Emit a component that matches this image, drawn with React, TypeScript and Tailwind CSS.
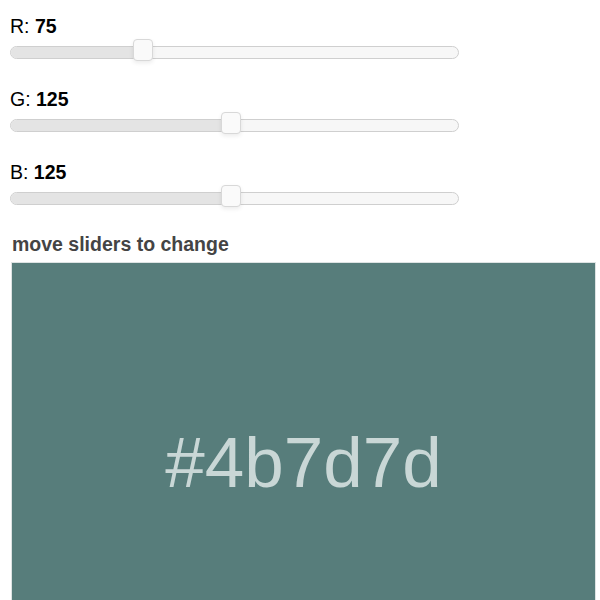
import React, { useState } from 'react';

const channels = [
  { key: 'r', label: 'R' },
  { key: 'g', label: 'G' },
  { key: 'b', label: 'B' },
] as const;

type Rgb = { r: number; g: number; b: number };

function Slider({ value }: { value: number }) {
  // thumb travel measured from the reference
  const left = Math.round(value * 1.76 - 10);
  return (
    <div className="relative mt-[9px] h-[13px] w-[449px] rounded-full border border-[#cfcfcf] bg-[#f7f7f7]">
      <div
        className="h-full rounded-l-full bg-[#e4e4e4]"
        style={{ width: left + 10 }}
      />
      <div
        className="absolute top-[-8px] h-[22px] w-[20px] rounded-[4px] border border-[#d8d8d8] bg-[#fafafa] shadow-[0_2px_4px_rgba(0,0,0,0.08)]"
        style={{ left }}
      />
    </div>
  );
}

export default function App() {
  const [rgb] = useState<Rgb>({ r: 75, g: 125, b: 125 });

  const hex =
    '#' +
    [rgb.r, rgb.g, rgb.b].map((v) => v.toString(16).padStart(2, '0')).join('');

  return (
    <div className="h-[600px] overflow-hidden bg-white font-['Liberation_Sans',Arial,sans-serif] text-black">
      <div className="flex flex-col gap-[29px] px-[10px] pt-[15px]">
        {channels.map((c) => (
          <div key={c.key}>
            <div className="text-[19.5px] leading-[22px]">
              {c.label}: <span className="font-bold">{rgb[c.key]}</span>
            </div>
            <Slider value={rgb[c.key]} />
          </div>
        ))}
      </div>
      <div className="mt-[28px] pl-[12px] text-[19.5px] font-bold leading-[22px] text-[#444]">
        move sliders to change
      </div>
      <div className="ml-[11px] mt-[7px] flex h-[400px] w-[585px] items-center justify-center border border-[#dde3e3] bg-[#577d7b]">
        <span className="text-[71px] leading-none text-[#c9d7d6]">{hex}</span>
      </div>
    </div>
  );
}
